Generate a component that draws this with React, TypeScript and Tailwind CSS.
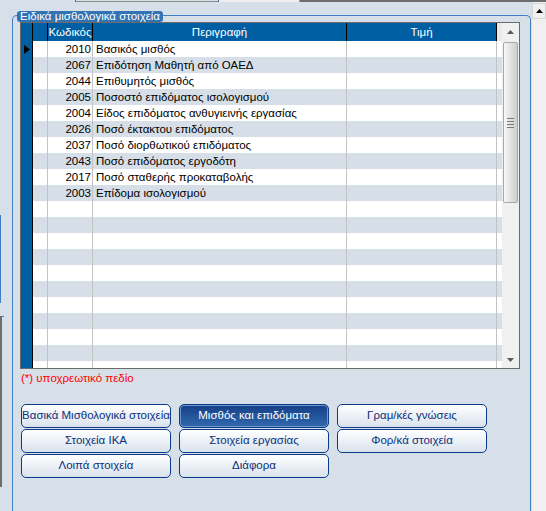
import React from "react";

const rows: [string, string][] = [
  ["2010", "Βασικός μισθός"],
  ["2067", "Επιδότηση Μαθητή από ΟΑΕΔ"],
  ["2044", "Επιθυμητός μισθός"],
  ["2005", "Ποσοστό επιδόματος ισολογισμού"],
  ["2004", "Είδος επιδόματος ανθυγιεινής εργασίας"],
  ["2026", "Ποσό έκτακτου επιδόματος"],
  ["2037", "Ποσό διορθωτικού επιδόματος"],
  ["2043", "Ποσό επιδόματος εργοδότη"],
  ["2017", "Ποσό σταθερής προκαταβολής"],
  ["2003", "Επίδομα ισολογισμού"],
];

const buttons = [
  "Βασικά Μισθολογικά στοιχεία",
  "Μισθός και επιδόματα",
  "Γραμ/κές γνώσεις",
  "Στοιχεία ΙΚΑ",
  "Στοιχεία εργασίας",
  "Φορ/κά στοιχεία",
  "Λοιπά στοιχεία",
  "Διάφορα",
];

function GridRow({ i }: { i: number }) {
  const r = rows[i];
  const bg = i % 2 === 0 ? "bg-white" : "bg-[#d6dfe8]";
  return (
    <div className="flex h-[16px] shrink-0 leading-[16px]">
      <div className="w-[11px] bg-[#005ea3] flex items-center justify-center">
        {i === 0 && (
          <svg width="6" height="9" viewBox="0 0 6 9">
            <path d="M0 0 L6 4.5 L0 9 Z" fill="#000" />
          </svg>
        )}
      </div>
      <div className="w-px bg-black" />
      <div className={`flex flex-1 ${bg}`}>
        <div className="w-[14px]" />
        <div className="w-px bg-[#c3c3c3]" />
        <div className="w-[44px] text-right pr-[1px]">{r ? r[0] : ""}</div>
        <div className="w-px bg-[#c3c3c3]" />
        <div className="w-[253px] pl-[3px] whitespace-nowrap overflow-hidden">{r ? r[1] : ""}</div>
        <div className="w-px bg-[#c3c3c3]" />
        <div className="w-[149px]" />
        <div className="w-px bg-[#c3c3c3]" />
        <div className="flex-1" />
      </div>
    </div>
  );
}

function Grid() {
  return (
    <div className="w-[500px] h-[347px] border border-[#6b6b6b] flex bg-white">
      <div className="w-[481px] flex flex-col overflow-hidden">
        {/* header */}
        <div className="flex h-[18px] shrink-0 text-white leading-[18px]">
          <div className="w-[11px] bg-[#005ea3]" />
          <div className="w-px bg-black" />
          <div className="w-[14px] bg-[#005ea3]" />
          <div className="w-px bg-black" />
          <div className="w-[44px] bg-[#005ea3] text-center">Κωδικός</div>
          <div className="w-px bg-black" />
          <div className="w-[253px] bg-[#005ea3] text-center">Περιγραφή</div>
          <div className="w-px bg-black" />
          <div className="w-[149px] bg-[#005ea3] text-center">Τιμή</div>
          <div className="w-px bg-black" />
          <div className="flex-1 bg-[#e6eaee]" />
        </div>
        {Array.from({ length: 21 }).map((_, i) => (
          <GridRow key={i} i={i} />
        ))}
      </div>
      {/* vertical scrollbar */}
      <div className="w-[17px] bg-[#f0f0f0] flex flex-col">
        <div className="h-[17px] flex items-center justify-center">
          <svg width="7" height="4" viewBox="0 0 7 4">
            <path d="M3.5 0 L7 4 L0 4 Z" fill="#5a5a5a" />
          </svg>
        </div>
        <div className="mt-[2px] mx-[1px] h-[161px] rounded-[2px] border border-[#a8a8a8] bg-linear-to-r from-[#f8f8f8] to-[#cdcdcd] flex flex-col items-center justify-center gap-[2px]">
          <div className="w-[7px] h-px bg-[#7a7a7a]" />
          <div className="w-[7px] h-px bg-[#7a7a7a]" />
          <div className="w-[7px] h-px bg-[#7a7a7a]" />
          <div className="w-[7px] h-px bg-[#7a7a7a]" />
        </div>
        <div className="flex-1" />
        <div className="h-[17px] flex items-center justify-center">
          <svg width="7" height="4" viewBox="0 0 7 4">
            <path d="M0 0 L7 0 L3.5 4 Z" fill="#5a5a5a" />
          </svg>
        </div>
      </div>
    </div>
  );
}

export default function App() {
  return (
    <div className="w-[546px] h-[511px] overflow-hidden bg-[#d7e0e9] font-['Liberation_Sans',Arial,sans-serif] text-[11.5px] text-black flex flex-col">
      {/* tab strip remains at top */}
      <div className="h-[2px] flex shrink-0">
        <div className="w-[75px]" />
        <div className="w-px bg-[#6d6d6d]" />
        <div className="w-[142px] border-b border-[#8a8a8a]" />
        <div className="w-px bg-[#3c7fc1]" />
        <div className="w-[80px] bg-[#eeeeee]" />
        <div className="w-px bg-[#9a9a9a]" />
        <div className="flex-1 bg-[#6d6d6d]" />
      </div>

      <div className="flex flex-1 min-h-0">
        {/* left edge of neighbouring panels */}
        <div className="w-[12px] flex flex-col">
          <div className="h-[213px]" />
          <div className="h-[88px] w-[3px] border-l border-[#3c7fc1]" />
          <div className="h-[13px]" />
          <div className="h-[171px] w-[4px] border-t border-l-2 border-[#6d6d6d] border-t-[#3c7fc1]" />
        </div>

        {/* group box */}
        <div className="relative w-[519px] mt-[13px] border-l border-t border-r border-[#3c80c2] rounded-t-[5px] pt-[6px] pl-[7px] pr-[10px]">
          <div className="absolute left-[4px] top-[-5px] h-[11px] px-[3px] rounded-[3px] bg-[#3473b3] text-white leading-[11px] whitespace-nowrap">
            Ειδικά μισθολογικά στοιχεία
          </div>

          <Grid />

          <div className="mt-[2px] pl-[1px] leading-[14px] text-[#ff0000]">(*) υποχρεωτικό πεδίο</div>

          <div className="mt-[19px] ml-[1px] grid grid-cols-[150px_150px_150px] gap-x-[8px] gap-y-[1px]">
            {buttons.map((b) =>
              b === "Μισθός και επιδόματα" ? (
                <div
                  key={b}
                  className="h-[24px] rounded-[5px] border border-[#0b3a84] bg-linear-to-b from-[#163f86] to-[#3169ae] shadow-[inset_0_0_0_1px_#6d98cf] text-white flex items-center justify-center whitespace-nowrap"
                >
                  {b}
                </div>
              ) : (
                <div
                  key={b}
                  className="h-[24px] rounded-[5px] border border-[#0a3a8a] bg-linear-to-b from-white to-[#d9e2ec] text-[#0a2f7c] flex items-center justify-center whitespace-nowrap"
                >
                  {b}
                </div>
              )
            )}
          </div>
        </div>

        {/* outer scrollbar */}
        <div className="w-[15px] bg-[#f0f0f0] border-l border-[#dedede] flex flex-col">
          <div className="mt-[1px] h-[16px] border border-[#d6d6d6] flex items-center justify-center">
            <svg width="7" height="4" viewBox="0 0 7 4">
              <path d="M3.5 0 L7 4 L0 4 Z" fill="#000" />
            </svg>
          </div>
        </div>
      </div>
    </div>
  );
}
